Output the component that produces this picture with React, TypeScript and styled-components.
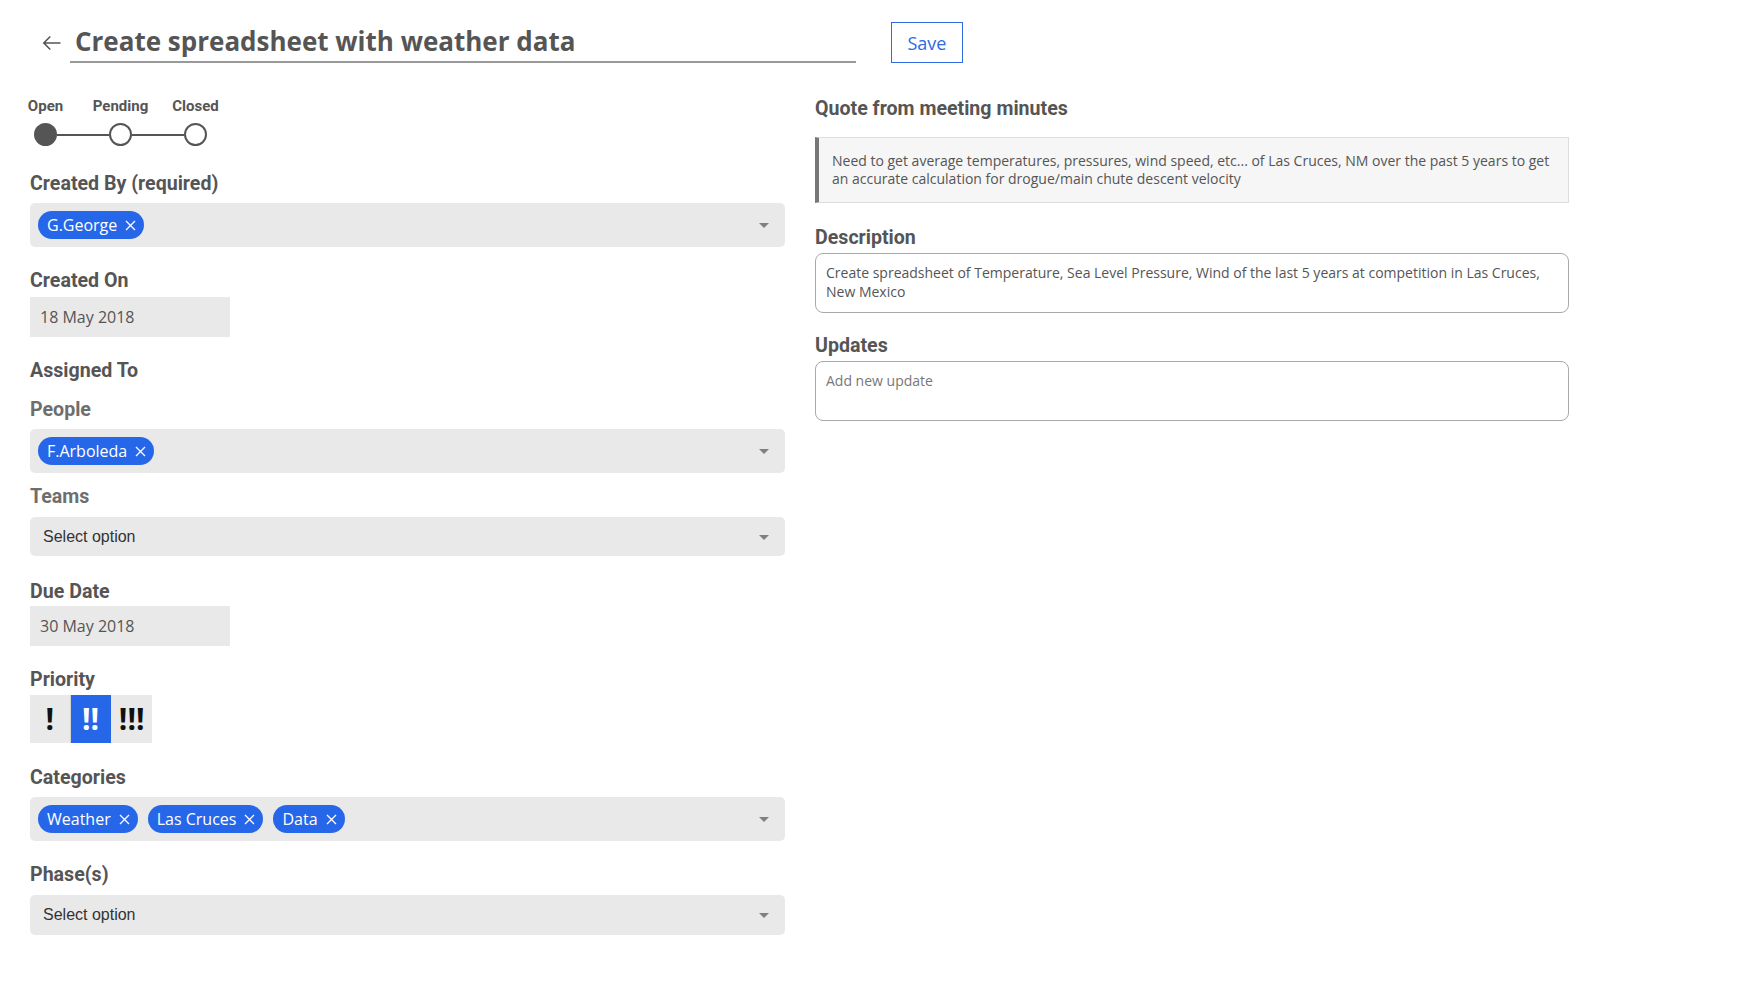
import React from "react";
import styled, { createGlobalStyle } from "styled-components";

const GlobalStyle = createGlobalStyle`
  * {
    box-sizing: border-box;
  }
  body {
    margin: 0;
    background: #fff;
    font-family: "Open Sans", "Liberation Sans", sans-serif;
    color: #555;
  }
`;

const BLUE = "#2667e9";
const FIELD_BG = "#e9e9e9";

const Page = styled.div`
  padding: 22px 0 40px 30px;
  width: 1600px;
`;

const Header = styled.div`
  display: flex;
  align-items: center;
  height: 41px;
`;

const BackButton = styled.button`
  border: none;
  background: none;
  padding: 0;
  margin: 0 0 0 10px;
  width: 22px;
  height: 22px;
  display: flex;
  align-items: center;
  justify-content: center;
  cursor: pointer;
  color: #555;
`;

const TitleInput = styled.input`
  width: 786px;
  height: 41px;
  margin-left: 8px;
  padding: 0 0 2px 5px;
  border: none;
  border-bottom: 2px solid #999;
  outline: none;
  font-family: "Open Sans", sans-serif;
  font-weight: 700;
  font-size: 26px;
  color: #555;
  background: transparent;
`;

const SaveButton = styled.button`
  margin-left: 35px;
  width: 72px;
  height: 41px;
  border: 1px solid #2d6ae3;
  background: #fff;
  color: #2d6ae3;
  font-family: "Open Sans", sans-serif;
  font-size: 18px;
  cursor: pointer;
`;

const Columns = styled.div`
  display: grid;
  grid-template-columns: 755px 754px;
  column-gap: 30px;
  margin-top: 33px;
`;

const Column = styled.div<{ $pt?: number }>`
  display: flex;
  flex-direction: column;
  padding-top: ${(p) => p.$pt ?? 0}px;
`;

const Stepper = styled.div`
  display: flex;
  align-items: flex-end;
  padding-left: 4px;
`;

const Step = styled.div`
  width: 23px;
  display: flex;
  flex-direction: column;
  align-items: center;
  gap: 8px;
`;

const StepLabel = styled.span`
  font-family: Roboto, sans-serif;
  font-weight: 700;
  font-size: 15px;
  line-height: 18px;
  white-space: nowrap;
  color: #555;
`;

const StepDot = styled.span<{ $active?: boolean }>`
  width: 23px;
  height: 23px;
  border-radius: 50%;
  border: 2px solid #555;
  background: ${(p) => (p.$active ? "#555" : "#fff")};
`;

const Connector = styled.span`
  width: 52px;
  height: 2px;
  background: #555;
  margin-bottom: 10.5px;
`;

const Field = styled.div<{ $mt: number; $gap: number }>`
  display: flex;
  flex-direction: column;
  margin-top: ${(p) => p.$mt}px;
  gap: ${(p) => p.$gap}px;
`;

const Label = styled.div<{ $sub?: boolean }>`
  font-family: Roboto, sans-serif;
  font-weight: 700;
  font-size: 19.6px;
  line-height: 24px;
  color: ${(p) => (p.$sub ? "#6e6e6e" : "#555")};
`;

const SelectBox = styled.div<{ $h: number }>`
  position: relative;
  display: flex;
  align-items: center;
  gap: 10px;
  height: ${(p) => p.$h}px;
  padding: 0 40px 0 8px;
  background: ${FIELD_BG};
  border-radius: 5px;
  cursor: pointer;
`;

const Caret = styled.span`
  position: absolute;
  right: 16px;
  top: 50%;
  margin-top: -2px;
  width: 0;
  height: 0;
  border-left: 5px solid transparent;
  border-right: 5px solid transparent;
  border-top: 5px solid #808080;
`;

const Placeholder = styled.span`
  padding-left: 5px;
  font-family: "Liberation Sans", Arial, sans-serif;
  font-size: 16px;
  color: #333;
`;

const ChipStyled = styled.span`
  display: inline-flex;
  align-items: center;
  gap: 8px;
  height: 28px;
  padding: 0 8px 0 9px;
  border-radius: 14px;
  background: ${BLUE};
  color: #fff;
  font-family: "Open Sans", sans-serif;
  font-size: 16px;
  white-space: nowrap;
`;

const DateBox = styled.div`
  width: 200px;
  height: 40px;
  display: flex;
  align-items: center;
  padding-left: 10px;
  background: ${FIELD_BG};
  font-family: "Open Sans", sans-serif;
  font-size: 16px;
  color: #555;
`;

const PriorityGroup = styled.div`
  display: grid;
  grid-template-columns: repeat(3, 40.7px);
  height: 48px;
`;

const PriorityButton = styled.button<{ $active?: boolean }>`
  border: none;
  border-right: 1px solid ${(p) => (p.$active ? BLUE : "#d2d2d2")};
  background: ${(p) => (p.$active ? BLUE : FIELD_BG)};
  color: ${(p) => (p.$active ? "#fff" : "#111")};
  font-family: "Open Sans", sans-serif;
  font-weight: 700;
  font-size: 30px;
  line-height: 1;
  padding: 0;
  cursor: pointer;
  &:last-child {
    border-right: none;
  }
`;

const Heading = styled.div`
  font-family: Roboto, sans-serif;
  font-weight: 700;
  font-size: 19.6px;
  line-height: 24px;
  color: #555;
`;

const Quote = styled.blockquote`
  margin: 16px 0 0;
  padding: 14px 16px 14px 13px;
  background: #f6f6f6;
  border: 1px solid #ddd;
  border-left: 4px solid #777;
  font-size: 14px;
  line-height: 18px;
  color: #555;
`;

const TextArea = styled.textarea`
  width: 100%;
  height: 60px;
  padding: 9px 10px;
  border: 1px solid #aaa;
  border-radius: 8px;
  resize: none;
  outline: none;
  overflow: hidden;
  font-family: "Open Sans", sans-serif;
  font-size: 14px;
  line-height: 19px;
  color: #555;
  &::placeholder {
    color: #777;
  }
`;

const ArrowLeft = () => (
  <svg width="19" height="16" viewBox="0 0 19 16" fill="none">
    <path
      d="M18.5 8H1.8M8.3 1.5L1.8 8l6.5 6.5"
      stroke="currentColor"
      strokeWidth="1.6"
    />
  </svg>
);

const CloseIcon = () => (
  <svg width="11" height="11" viewBox="0 0 11 11" fill="none">
    <path d="M1 1l9 9M10 1l-9 9" stroke="#fff" strokeWidth="1.3" />
  </svg>
);

const Chip = ({ label }: { label: string }) => (
  <ChipStyled>
    {label}
    <CloseIcon />
  </ChipStyled>
);

const MultiSelect = ({ values }: { values: string[] }) => (
  <SelectBox $h={44}>
    {values.map((v) => (
      <Chip key={v} label={v} />
    ))}
    <Caret />
  </SelectBox>
);

const Select = ({ h }: { h: number }) => (
  <SelectBox $h={h}>
    <Placeholder>Select option</Placeholder>
    <Caret />
  </SelectBox>
);

const steps = ["Open", "Pending", "Closed"];

export default function App() {
  const [priority, setPriority] = React.useState(1);

  return (
    <Page>
      <GlobalStyle />
      <Header>
        <BackButton aria-label="Back">
          <ArrowLeft />
        </BackButton>
        <TitleInput defaultValue="Create spreadsheet with weather data" />
        <SaveButton>Save</SaveButton>
      </Header>

      <Columns>
        <Column $pt={1}>
          <Stepper>
            {steps.map((s, i) => (
              <React.Fragment key={s}>
                {i > 0 && <Connector />}
                <Step>
                  <StepLabel>{s}</StepLabel>
                  <StepDot $active={i === 0} />
                </Step>
              </React.Fragment>
            ))}
          </Stepper>

          <Field $mt={26} $gap={7}>
            <Label>Created By (required)</Label>
            <MultiSelect values={["G.George"]} />
          </Field>

          <Field $mt={22} $gap={4}>
            <Label>Created On</Label>
            <DateBox>18 May 2018</DateBox>
          </Field>

          <Field $mt={22} $gap={0}>
            <Label>Assigned To</Label>
          </Field>

          <Field $mt={15} $gap={7}>
            <Label $sub>People</Label>
            <MultiSelect values={["F.Arboleda"]} />
          </Field>

          <Field $mt={12} $gap={8}>
            <Label $sub>Teams</Label>
            <Select h={39} />
          </Field>

          <Field $mt={24} $gap={2}>
            <Label>Due Date</Label>
            <DateBox>30 May 2018</DateBox>
          </Field>

          <Field $mt={22} $gap={3}>
            <Label>Priority</Label>
            <PriorityGroup>
              {["!", "!!", "!!!"].map((p, i) => (
                <PriorityButton
                  key={p}
                  $active={priority === i}
                  onClick={() => setPriority(i)}
                >
                  {p}
                </PriorityButton>
              ))}
            </PriorityGroup>
          </Field>

          <Field $mt={23} $gap={7}>
            <Label>Categories</Label>
            <MultiSelect values={["Weather", "Las Cruces", "Data"]} />
          </Field>

          <Field $mt={22} $gap={8}>
            <Label>Phase(s)</Label>
            <Select h={40} />
          </Field>
        </Column>

        <Column $pt={1}>
          <Heading>Quote from meeting minutes</Heading>
          <Quote>
            Need to get average temperatures, pressures, wind speed, etc... of
            Las Cruces, NM over the past 5 years to get an accurate calculation
            for drogue/main chute descent velocity
          </Quote>

          <Field $mt={23} $gap={3}>
            <Heading>Description</Heading>
            <TextArea defaultValue="Create spreadsheet of Temperature, Sea Level Pressure, Wind of the last 5 years at competition in Las Cruces, New Mexico" />
          </Field>

          <Field $mt={21} $gap={3}>
            <Heading>Updates</Heading>
            <TextArea placeholder="Add new update" />
          </Field>
        </Column>
      </Columns>
    </Page>
  );
}
